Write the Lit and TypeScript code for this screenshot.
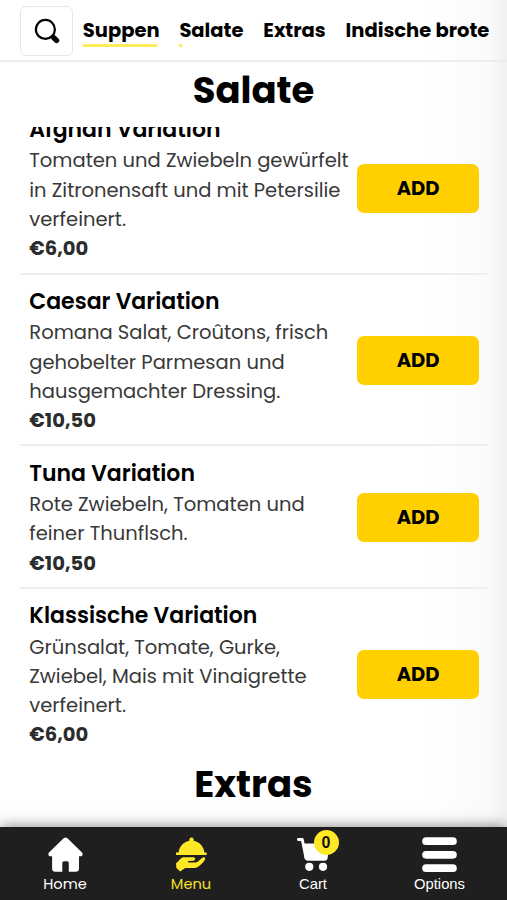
import { LitElement, html, css, svg } from "lit";
import { styleMap } from "lit/directives/style-map.js";

interface Dish {
  name: string;
  description: string[];
  price: string;
}

const categories = [
  { label: "Suppen", progress: 0.97 },
  { label: "Salate", progress: 0.04 },
  { label: "Extras", progress: 0 },
  { label: "Indische brote", progress: 0 },
];

const dishes: Dish[] = [
  {
    name: "Afghan Variation",
    description: ["Tomaten und Zwiebeln gewürfelt", "in Zitronensaft und mit Petersilie", "verfeinert."],
    price: "€6,00",
  },
  {
    name: "Caesar Variation",
    description: ["Romana Salat, Croûtons, frisch", "gehobelter Parmesan und", "hausgemachter Dressing."],
    price: "€10,50",
  },
  {
    name: "Tuna Variation",
    description: ["Rote Zwiebeln, Tomaten und", "feiner Thunflsch."],
    price: "€10,50",
  },
  {
    name: "Klassische Variation",
    description: ["Grünsalat, Tomate, Gurke,", "Zwiebel, Mais mit Vinaigrette", "verfeinert."],
    price: "€6,00",
  },
];

const homeIcon = svg`<svg class="icon" viewBox="0 0 35 35" width="35" height="35">
  <path fill="#fff" d="M15.6 1.300a2.800 2.800 0 0 1 3.800 0L34 15.600c1.300 1.400.5 3.700-1.500 3.700H31V31.500a3.300 3.300 0 0 1-3.300 3.300H20.800V26a1.700 1.700 0 0 0-1.700-1.700h-3.100a1.700 1.700 0 0 0-1.700 1.700v8.800H7.400A3.300 3.300 0 0 1 4.100 31.500V19.300H2.500C.5 19.300-.3 17 1 15.600Z"/>
</svg>`;

const menuIcon = svg`<svg class="icon" viewBox="0 0 35 35" width="35" height="35">
  <g fill="#ffe926">
    <path d="M17.500 .6a2.200 2.200 0 0 1 2 3.200c5.900 1 10.300 5.800 10.900 11.600h2.200v2.500H2v-2.500h2.600C5.200 9.600 9.600 4.800 15.500 3.800a2.200 2.200 0 0 1 2-3.200Z"/>
    <path d="M2 26.500 6.800 21.600c1.100-1 2.100-1.400 3.500-1.400h8.900c2.700 0 2.600 3.300.2 3.500l-4.800.4c-.9.100-.8 1.500.1 1.500h6.500c1.100 0 2-.4 2.800-1.100l4.300-3.700c1.700-1.300 3.900.2 2.500 2.100-2.100 3-4.500 5.400-7.400 7.300-.9.600-1.800.8-2.900.8H12.500c-1.300 0-2.200.4-3.100 1.200L6.200 34.600 2.400 31Z"/>
  </g>
</svg>`;

const cartIcon = svg`<svg class="icon" viewBox="0 0 35 35" width="35" height="35">
  <path d="M2.400 2.500H6.300L9.900 20.800" fill="none" stroke="#fff" stroke-width="2.900" stroke-linecap="round" stroke-linejoin="round"/>
  <path d="M7.200 6.500H33.500L31.600 21a3 3 0 0 1-3 2.700H12a3.400 3.400 0 0 1-3.300-2.800Z" fill="#fff"/>
  <circle cx="13.300" cy="29.800" r="4.100" fill="#fff"/>
  <circle cx="27" cy="29.800" r="4.100" fill="#fff"/>
</svg>`;

const optionsIcon = svg`<svg class="icon" viewBox="0 0 35 35" width="35" height="35">
  <g fill="#fff">
    <rect x="0.200" y="0.300" width="34.600" height="7.700" rx="3.850"/>
    <rect x="0.200" y="14" width="34.600" height="7.700" rx="3.850"/>
    <rect x="0.200" y="27.300" width="34.600" height="7.700" rx="3.850"/>
  </g>
</svg>`;

class AppRoot extends LitElement {
  static styles = css`
    * { box-sizing: border-box; }
    :host {
      display: flex;
      flex-direction: column;
      position: relative;
      height: 900px;
      overflow: hidden;
      background: linear-gradient(to right, #fff 430px, #fcfcfc 465px, #fafafa 488px, #f2f2f2 507px);
      color: #000;
      font-family: Poppins, Inter, sans-serif;
      white-space: nowrap;
    }
    .bar {
      flex: none;
      height: 62px;
      display: flex;
      align-items: flex-start;
      padding: 6px 0 0 20px;
      border-bottom: 2px solid #ededed;
    }
    .search {
      flex: none;
      width: 53px;
      height: 50px;
      margin-right: 9.800px;
      padding: 0;
      border: 1.500px solid #e6e6e6;
      border-radius: 6px;
      background: #fff;
      display: grid;
      place-items: center;
    }
    .links { display: flex; gap: 19.800px; padding-top: 9.500px; }
    .link { display: flex; flex-direction: column; }
    .label { font-size: 19.500px; font-weight: 700; line-height: 29px; }
    .progress { height: 3px; margin-top: -0.500px; background: #fbec5a; }
    .heading {
      margin: 0;
      text-align: center;
      font-size: 37px;
      font-weight: 700;
      line-height: 54px;
    }
    .first { flex: none; height: 65px; padding-top: 1px; }
    .last { margin-top: -3.700px; }
    .list {
      flex: none;
      height: 633.700px;
      padding: 0 19px 0 20px;
      overflow: hidden;
      display: flex;
      flex-direction: column;
      justify-content: flex-end;
    }
    .dish {
      flex: none;
      display: flex;
      align-items: center;
      justify-content: space-between;
      padding: 10.300px 9px 9px 9.300px;
      border-bottom: 2px solid #eee;
    }
    .dish:last-child { border-bottom-color: transparent; }
    .text { display: flex; flex-direction: column; }
    .name { font-size: 22px; font-weight: 600; line-height: 33.300px; }
    .line { font-size: 19.530px; line-height: 29.300px; color: #383838; }
    .price { font-size: 19.530px; font-weight: 700; line-height: 29.300px; color: #2c2c2c; }
    .add {
      flex: none;
      width: 122px;
      height: 49px;
      padding: 0;
      border: 0;
      border-radius: 7px;
      background: #ffcf00;
      font: inherit;
      font-size: 19.500px;
      font-weight: 700;
      color: #000;
    }
    .tabs {
      position: absolute;
      left: 0;
      right: 0;
      bottom: 0;
      height: 73px;
      padding: 10px 1px 0 2.500px;
      display: grid;
      grid-template-columns: 125px 127px 117px 136px;
      background: #1f1f1f;
      box-shadow: 0 0 14px rgba(0, 0, 0, 0.5);
      color: #fff;
    }
    .tab {
      display: flex;
      flex-direction: column;
      align-items: center;
      font-size: 14.600px;
      line-height: 20px;
    }
    .menu { color: #f5e02b; }
    .plain { font-family: "Liberation Sans", Arial, sans-serif; font-size: 14.800px; }
    .icon { display: block; }
    .caption { margin-top: 2px; }
    .pic { position: relative; }
    .badge {
      position: absolute;
      left: 18px;
      top: -7px;
      width: 25px;
      height: 25px;
      border-radius: 50%;
      background: #ffe926;
      color: #111;
      font: 700 16px/25px "Liberation Sans", Arial, sans-serif;
      text-align: center;
    }
  `;

  render() {
    return html`
      <header class="bar">
        <button class="search" aria-label="Suche">
          <svg width="26" height="26" viewBox="0 0 26 26">
            <circle cx="11.400" cy="11.400" r="9.500" fill="none" stroke="#000" stroke-width="2.200" />
            <path d="M17.500 17.500 19.700 19.500" stroke="#000" stroke-width="2.600" />
            <path d="M19.900 19.900 22.500 22.400" stroke="#000" stroke-width="5.400" stroke-linecap="round" />
          </svg>
        </button>
        <nav class="links">
          ${categories.map(
            (c) => html`<div class="link">
              <span class="label">${c.label}</span>
              <div class="progress" style=${styleMap({ width: `${c.progress * 100}%` })}></div>
            </div>`
          )}
        </nav>
      </header>
      <h1 class="heading first">Salate</h1>
      <section class="list">
        ${dishes.map(
          (d) => html`<article class="dish">
            <div class="text">
              <span class="name">${d.name}</span>
              ${d.description.map((l) => html`<span class="line">${l}</span>`)}
              <span class="price">${d.price}</span>
            </div>
            <button class="add">ADD</button>
          </article>`
        )}
      </section>
      <h1 class="heading last">Extras</h1>
      <footer class="tabs">
        <div class="tab home"><div class="pic">${homeIcon}</div><span class="caption">Home</span></div>
        <div class="tab menu"><div class="pic">${menuIcon}</div><span class="caption">Menu</span></div>
        <div class="tab plain">
          <div class="pic">${cartIcon}<span class="badge">0</span></div>
          <span class="caption">Cart</span>
        </div>
        <div class="tab plain"><div class="pic">${optionsIcon}</div><span class="caption">Options</span></div>
      </footer>
    `;
  }
}
customElements.define("app-root", AppRoot);
